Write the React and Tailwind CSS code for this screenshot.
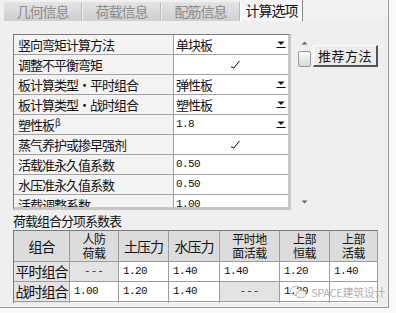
const rows = [
  { label: '竖向弯矩计算方法', value: '单块板', dd: true },
  { label: '调整不平衡弯矩', check: true },
  { label: '板计算类型・平时组合', value: '弹性板', dd: true },
  { label: '板计算类型・战时组合', value: '塑性板', dd: true },
  { label: '塑性板', beta: true, value: '1.8', num: true, dd: true },
  { label: '蒸气养护或掺早强剂', check: true },
  { label: '活载准永久值系数', value: '0.50', num: true },
  { label: '水压准永久值系数', value: '0.50', num: true },
  { label: '活载调整系数', value: '1.00', num: true },
];

const cjk = { fontFamily: '"Noto Sans CJK SC", "Noto Sans", sans-serif' };
const mono = { fontFamily: '"Liberation Mono", monospace' };

function DropArrow() {
  return (
    <svg width="10" height="9" viewBox="0 0 10 9" className="shrink-0">
      <path d="M1.5 1.5 H8.5 L5 5 Z" fill="#111" />
      <path d="M0.5 7.5 H9.5" stroke="#111" strokeWidth="1" />
    </svg>
  );
}

function Tick() {
  return (
    <svg width="11" height="10" viewBox="0 0 11 10">
      <path d="M1 7 L3.5 7.5 M3.5 8.5 L9.5 1" stroke="#111" strokeWidth="1" fill="none" />
    </svg>
  );
}

function Tab({ label, active }) {
  if (active) {
    return (
      <div className="h-[21px] w-[63px] flex items-center justify-center bg-[#f7f7f7] border-l border-white border-r border-r-[#8a8a8a] text-[14px] tracking-[-1px] text-[#111]" style={cjk}>
        {label}
      </div>
    );
  }
  return (
    <div className="h-[19px] w-[79px] flex items-center justify-center bg-gradient-to-b from-[#e4e4e4] to-[#cfcfcf] border-r border-r-[#bdbdbd] border-l border-l-[#f0f0f0] text-[14px] tracking-[-1px] text-[#8c8c8c]" style={cjk}>
      {label}
    </div>
  );
}

function GridRow({ row }) {
  return (
    <div className="flex h-[20px] border-b border-[#a2a2a2] text-[13px] tracking-[-1px] text-[#111]" style={cjk}>
      <div className="w-[160px] shrink-0 bg-[#f3f3f3] border-r border-[#a2a2a2] pl-[4px] flex items-center leading-none">
        {row.label}
        {row.beta && <span className="text-[9px] self-start mt-[3px] ml-[1px]">β</span>}
      </div>
      <div className="flex-1 bg-white flex items-center pl-[2px] pr-[2px] leading-none">
        {row.check ? (
          <div className="w-full flex justify-center pl-[8px]"><Tick /></div>
        ) : (
          <>
            <span className={row.num ? 'text-[11px] tracking-[-0.6px]' : ''} style={row.num ? mono : undefined}>{row.value}</span>
            {row.dd && <span className="ml-auto"><DropArrow /></span>}
          </>
        )}
      </div>
    </div>
  );
}

const cols = 'grid grid-cols-[56px_49px_50px_51px_60px_50px_48px]';
const cell = 'border-r border-b border-[#9c9c9c] flex items-center';

function Head({ lines }) {
  return (
    <div className={`${cell} justify-center bg-[#dcdcdc] h-[31px] flex-col`} style={cjk}>
      {lines.length === 1 ? (
        <span className="text-[14px] tracking-[-1px] text-[#111] leading-none">{lines[0]}</span>
      ) : (
        lines.map((l) => (
          <span key={l} className="text-[12px] tracking-[-0.5px] text-[#111] leading-[14px]">{l}</span>
        ))
      )}
    </div>
  );
}

function Num({ v }) {
  if (v === '---') {
    return <div className={`${cell} h-[20px] bg-[#e3e3e3] justify-center text-[11px] text-[#333]`} style={mono}>---</div>;
  }
  return (
    <div className={`${cell} h-[20px] bg-white pl-[4px] text-[11px] tracking-[-0.6px] text-[#111]`} style={mono}>{v}</div>
  );
}

function RowHead({ label }) {
  return (
    <div className={`${cell} h-[20px] bg-[#e3e3e3] justify-center text-[14px] tracking-[-1px] text-[#111]`} style={cjk}>{label}</div>
  );
}

export default function App() {
  return (
    <div className="w-[396px] h-[313px] bg-[#f9f9f9] relative overflow-hidden" style={cjk}>
      <div className="w-[389px] h-[308px] bg-[#efefef] border-r border-b border-[#9a9a9a] flex flex-col">
        {/* tabs */}
        <div className="h-[21px] flex items-end pl-[3px] bg-[#f1f1f1]">
          <Tab label="几何信息" />
          <Tab label="荷载信息" />
          <Tab label="配筋信息" />
          <Tab label="计算选项" active />
        </div>

        <div className="flex-1 flex flex-col pl-[13px]">
          <div className="flex mt-[13px] h-[176px]">
            {/* property grid */}
            <div className="w-[278px] h-[176px] border-l border-t border-[#7c7c7c] border-r-[3px] border-b-[3px] border-r-[#c6c6c6] border-b-[#c6c6c6] overflow-hidden bg-white">
              {rows.map((r) => (
                <GridRow key={r.label} row={r} />
              ))}
            </div>
            {/* scrollbar */}
            <div className="ml-[6px] w-[14px] flex flex-col items-center">
              <svg width="7" height="4" viewBox="0 0 7 4" className="mt-[7px]">
                <path d="M0.5 3.5 L3.5 0.5 L6.5 3.5 Z" fill="#666" />
              </svg>
              <div className="mt-[6px] w-[13px] h-[16px] rounded-[2px] border border-[#9a9a9a] bg-gradient-to-b from-[#fdfdfd] to-[#d8d8d8]" />
              <svg width="7" height="4" viewBox="0 0 7 4" className="mt-auto mb-[6px]">
                <path d="M0.5 0.5 L3.5 3.5 L6.5 0.5 Z" fill="#666" />
              </svg>
            </div>
            {/* button */}
            <div className="ml-[2px] mt-[11px] w-[65px] h-[22px] bg-[#ececec] border-t border-l border-white border-r-2 border-b-2 border-r-[#555] border-b-[#555] flex items-center justify-center text-[13px] tracking-[0.5px] text-[#111]">
              推荐方法
            </div>
          </div>

          <div className="h-[20px] flex items-center text-[13px] tracking-[-1px] text-[#111] leading-none">
            荷载组合分项系数表
          </div>

          {/* combination table */}
          <div className="h-[73px] overflow-hidden">
            <div className={`${cols} w-[365px] border-l border-t border-[#7c7c7c]`}>
              <Head lines={['组合']} />
              <Head lines={['人防', '荷载']} />
              <Head lines={['土压力']} />
              <Head lines={['水压力']} />
              <Head lines={['平时地', '面活载']} />
              <Head lines={['上部', '恒载']} />
              <Head lines={['上部', '活载']} />

              <RowHead label="平时组合" />
              <Num v="---" />
              <Num v="1.20" />
              <Num v="1.40" />
              <Num v="1.40" />
              <Num v="1.20" />
              <Num v="1.40" />

              <RowHead label="战时组合" />
              <Num v="1.00" />
              <Num v="1.20" />
              <Num v="1.40" />
              <Num v="---" />
              <Num v="1.20" />
              <Num v="" />

              <RowHead label="" />
              <Num v="" />
              <Num v="" />
              <Num v="" />
              <Num v="" />
              <Num v="" />
              <Num v="" />
            </div>
          </div>
        </div>
      </div>

      {/* watermark */}
      <div className="absolute left-[289px] top-[285px] flex items-center gap-[4px] text-[#a9a9a9] opacity-90">
        <svg width="18" height="14" viewBox="0 0 18 14" fill="none" stroke="#b0b0b0" strokeWidth="1">
          <ellipse cx="7" cy="6" rx="6" ry="4.5" />
          <ellipse cx="12" cy="9" rx="5" ry="3.8" fill="#f4f4f4" />
        </svg>
        <span className="text-[11px] tracking-[-0.3px] leading-none" style={cjk}>SPACE建筑设计</span>
      </div>
    </div>
  );
}
